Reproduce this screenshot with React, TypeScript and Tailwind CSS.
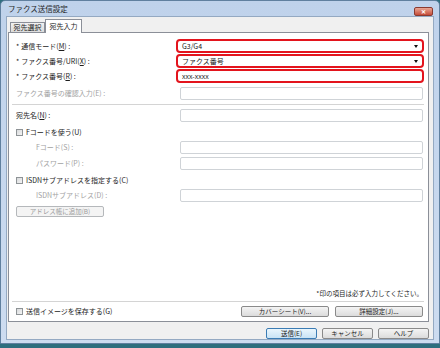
import React from 'react';

const Star = () => <span className="mr-[2px]">*</span>;

const Field = ({ red, value, select }: { red?: boolean; value?: string; select?: boolean }) =>
  red ? (
    <div className="w-[248px] h-[14px] border-2 border-[#e3141d] rounded-[4px] bg-white flex items-center pl-[4px] pr-[4px]">
      <span className="text-[7px] text-[#222]">{value}</span>
      {select && <span className="ml-auto w-0 h-0 border-l-[2.5px] border-r-[2.5px] border-t-[3px] border-l-transparent border-r-transparent border-t-[#111]" />}
    </div>
  ) : (
    <div className="w-[243px] h-[13px] mr-[1px] border border-[#cfd3d7] rounded-[2px] bg-white" />
  );

const Check = ({ label }: { label: string }) => (
  <div className="flex items-center h-[12px] gap-[3px]">
    <div className="w-[7px] h-[7px] border border-[#8e9396] bg-gradient-to-br from-[#d8dadc] to-[#f4f4f4]" />
    <span>{label}</span>
  </div>
);

const Btn = ({ label, w, disabled, primary }: { label: string; w: string; disabled?: boolean; primary?: boolean }) => (
  <div
    className={`${w} h-[11px] rounded-[2px] border flex items-center justify-center text-[6.5px] ${
      disabled
        ? 'border-[#b5b8bb] bg-[#f4f4f4] text-[#9b9b9b]'
        : primary
        ? 'border-[#3b7cb4] bg-gradient-to-b from-[#eaf6fd] to-[#c9e3f5] text-[#222]'
        : 'border-[#8a8a8a] bg-gradient-to-b from-[#f4f4f4] to-[#dcdcdc] text-[#222]'
    }`}
  >
    {label}
  </div>
);

export default function App() {
  return (
    <div className="w-[440px] h-[348px] bg-[#2e6e7e] overflow-hidden font-['Noto_Sans_CJK_JP',sans-serif] text-[7px] leading-none text-[#1c1c1c]">
      <div className="h-[344px] border border-[#60809f] rounded-t-[5px] bg-gradient-to-b from-[#bfd2eb] to-[#cddcf0] flex flex-col px-[5px] pb-[3px]">
        {/* title bar */}
        <div className="h-[16px] flex items-center pl-[2px] relative">
          <span className="text-[7.5px] text-[#1e1e1e]">ファクス送信設定</span>
          <div className="absolute right-[1px] top-[6px] w-[19px] h-[9px] rounded-[2px] border border-[#8a3a30] bg-gradient-to-b from-[#e9a694] to-[#c44a38] flex items-center justify-center text-white text-[6px] font-bold">
            ✕
          </div>
        </div>

        {/* client */}
        <div className="flex-1 bg-[#f0f0f0] border border-[#94a9c2] flex flex-col pl-[1px] pr-[4px] pt-[2px]">
          {/* tabs */}
          <div className="h-[13px] flex items-end pl-[2px] relative z-10">
            <div className="w-[35px] h-[10px] border border-b-0 border-[#8b8f98] bg-gradient-to-b from-[#f1f1f1] to-[#dcdcdc] flex items-center justify-center">
              宛先選択
            </div>
            <div className="w-[37px] h-[14px] -mb-[1px] border border-b-0 border-[#8b8f98] bg-white flex items-center justify-center">
              宛先入力
            </div>
          </div>

          {/* panel */}
          <div className="h-[290px] border border-[#8b8f98] bg-white flex flex-col pl-[7px] pr-[4px] pt-[6px]">
            <div className="h-[14px] flex items-center">
              <Star />
              <span>通信モード(<u>M</u>) :</span>
              <div className="ml-auto"><Field red select value="G3/G4" /></div>
            </div>
            <div className="h-[14px] mt-[1px] flex items-center">
              <Star />
              <span>ファクス番号/URI(<u>X</u>) :</span>
              <div className="ml-auto"><Field red select value="ファクス番号" /></div>
            </div>
            <div className="h-[14px] mt-[1px] flex items-center">
              <Star />
              <span>ファクス番号(<u>R</u>) :</span>
              <div className="ml-auto"><Field red value="xxx-xxxx" /></div>
            </div>
            <div className="h-[14px] mt-[3px] flex items-center text-[#a2a2a2]">
              <span>ファクス番号の確認入力(E) :</span>
              <div className="ml-auto"><Field /></div>
            </div>
            <div className="h-px mt-[4px] bg-[#d4d4d4] -ml-[4px]" />
            <div className="h-[13px] mt-[4px] flex items-center">
              <span>宛先名(<u>N</u>) :</span>
              <div className="ml-auto"><Field /></div>
            </div>
            <div className="mt-[4px]"><Check label="Fコードを使う(U)" /></div>
            <div className="h-[13px] mt-[3px] flex items-center text-[#a2a2a2] pl-[20px]">
              <span>Fコード(S) :</span>
              <div className="ml-auto"><Field /></div>
            </div>
            <div className="h-[13px] mt-[3px] flex items-center text-[#a2a2a2] pl-[20px]">
              <span>パスワード(P) :</span>
              <div className="ml-auto"><Field /></div>
            </div>
            <div className="mt-[4px]"><Check label="ISDNサブアドレスを指定する(C)" /></div>
            <div className="h-[13px] mt-[3px] flex items-center text-[#a2a2a2] pl-[20px]">
              <span>ISDNサブアドレス(D) :</span>
              <div className="ml-auto"><Field /></div>
            </div>
            <div className="mt-[4px]">
              <Btn label="アドレス帳に追加(B)" w="w-[88px]" disabled />
            </div>

            <div className="flex-1" />
            <div className="h-[10px] flex items-center justify-end pr-[1px] text-[6.5px]">*印の項目は必ず入力してください。</div>
            <div className="h-px mt-[3px] bg-[#d4d4d4] -ml-[4px]" />
            <div className="h-[12px] mt-[3px] mb-[4px] flex items-center">
              <Check label="送信イメージを保存する(G)" />
              <div className="ml-auto flex gap-[6px] pr-[1px]">
                <Btn label="カバーシート(V)..." w="w-[88px]" />
                <Btn label="詳細設定(J)..." w="w-[88px]" />
              </div>
            </div>
          </div>

          {/* dialog buttons */}
          <div className="mt-[6px] flex justify-end gap-[5px] pr-[0px]">
            <Btn label="送信(E)" w="w-[51px]" primary />
            <Btn label="キャンセル" w="w-[51px]" />
            <Btn label="ヘルプ" w="w-[51px]" />
          </div>
        </div>
      </div>
    </div>
  );
}
